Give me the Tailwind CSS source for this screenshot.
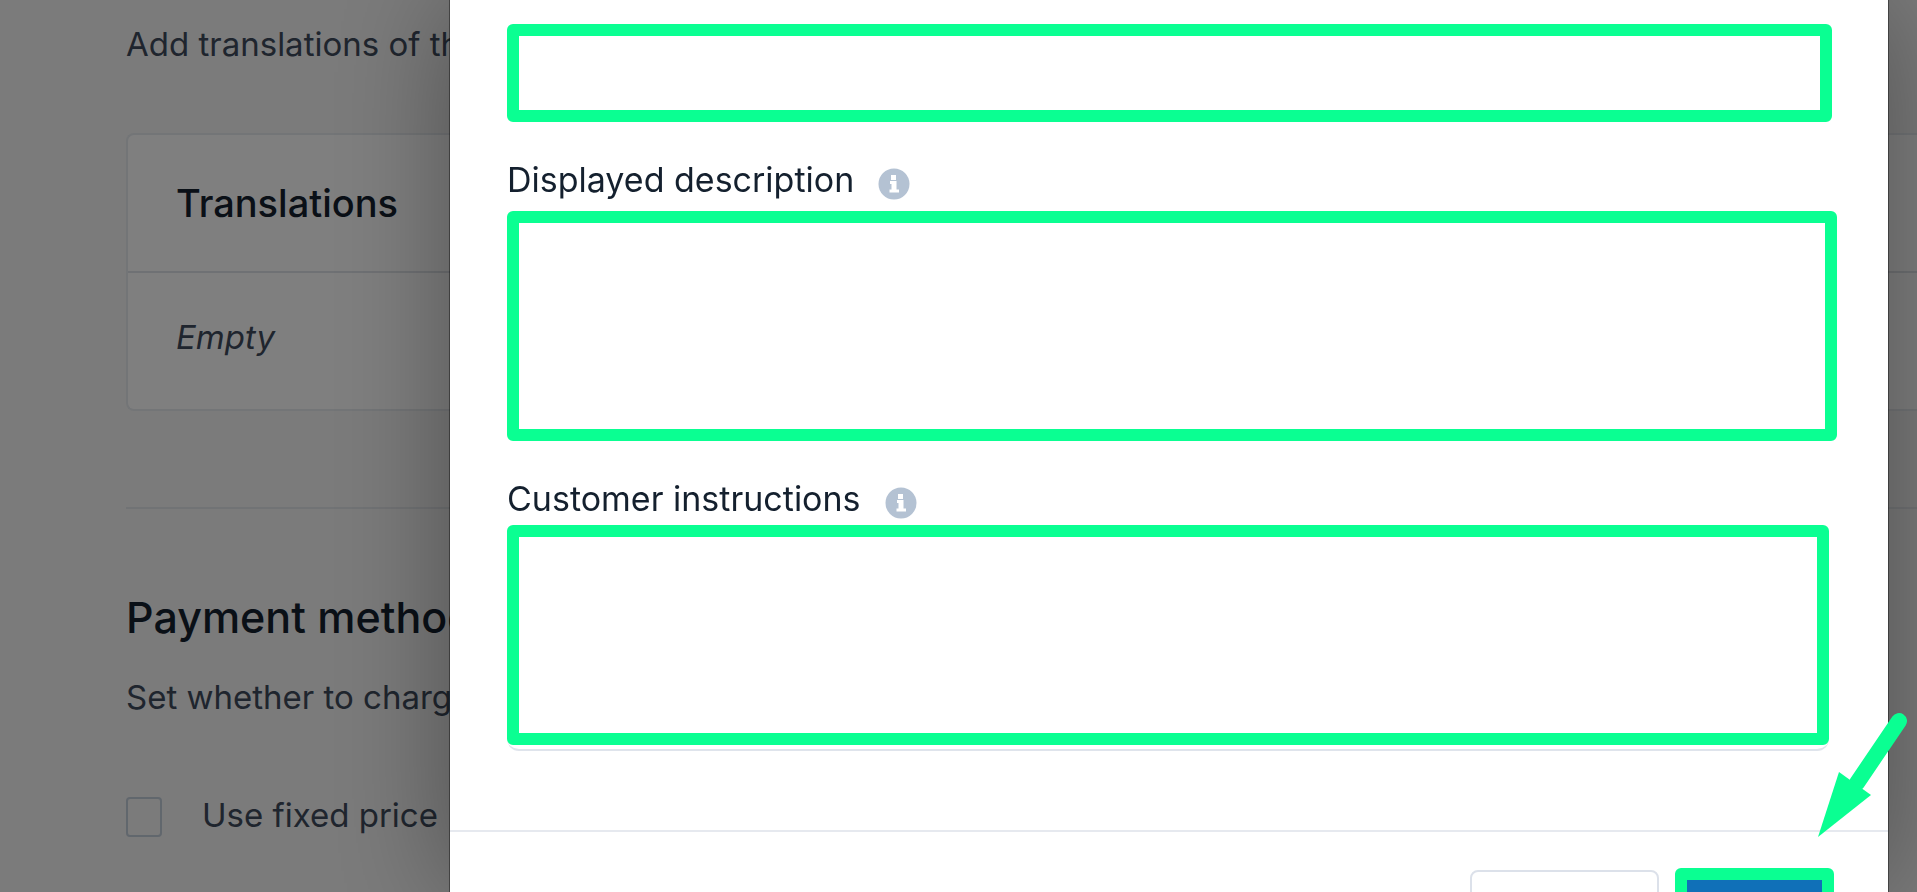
<!DOCTYPE html>
<html lang="en">

<head>
    <meta charset="utf-8">
    <title>Payment settings</title>
    <script src="https://cdn.jsdelivr.net/npm/@tailwindcss/browser@4"></script>
</head>

<body class="h-screen overflow-hidden bg-[#f6f6f6] font-['Inter',sans-serif] text-[#14202e]">
    <!-- settings page -->
    <main class="pt-6 pl-[126px] text-[33px] leading-10 text-[#3f4b5c]">
        <p>Add translations of the text</p>

        <section class="mt-[69px] rounded-l-lg border-2 border-r-0 border-[#e6eaee] bg-white">
            <h3 class="border-b-2 border-[#dfe3e8] px-12 py-12 text-[38px] leading-10 font-medium text-[#14202e]">Translations</h3>
            <p class="px-12 pt-11 pb-13 italic">Empty</p>
        </section>

        <hr class="mt-24 border-t-2 border-[#e3e6ea]">

        <h2 class="mt-[84px] text-[43px] leading-12 font-medium text-[#14202e]">Payment method fee</h2>
        <p class="mt-9">Set whether to charge a fee</p>
        <div class="mt-20 flex items-start gap-10">
            <input type="checkbox" id="fixed-price"
                class="h-10 w-9 appearance-none rounded-sm border-2 border-[#c2cedb] bg-[#f6f6f6]">
            <label for="fixed-price" class="leading-9">Use fixed price</label>
        </div>
    </main>

    <!-- modal -->
    <div class="fixed inset-0 flex bg-black/50 pr-7 pl-[449px]">
        <div role="dialog" aria-label="Add translation"
            class="flex-1 border-x border-black/40 bg-white bg-clip-padding pt-6 shadow-[0_0_110px_rgba(0,0,0,0.35)]">
            <form class="text-[34px] leading-11">
                <div class="pr-14 pl-[57px]">
                    <input type="text" aria-label="Displayed name"
                        class="block h-[98px] w-full rounded-md border-12 border-[#0aff92]">

                    <div class="mt-9 flex items-center gap-6">
                        <label for="description">Displayed description</label>
                        <svg class="mt-2 size-8" viewBox="0 0 32 32">
                            <circle cx="16" cy="16" r="15.5" fill="#b4c2d3" />
                            <path d="M13 7h5v5h-5zM12 13h6.500v8.500h2.500v3h-9.500v-3h2v-5.500h-1.500z" fill="#fff" />
                        </svg>
                    </div>
                    <textarea id="description"
                        class="mt-[9px] block h-[230px] w-[calc(100%+5px)] resize-none rounded-md border-12 border-[#0aff92]"></textarea>

                    <div class="mt-9 flex items-center gap-6">
                        <label for="instructions">Customer instructions</label>
                        <svg class="mt-2 size-8" viewBox="0 0 32 32">
                            <circle cx="16" cy="16" r="15.5" fill="#b4c2d3" />
                            <path d="M13 7h5v5h-5zM12 13h6.500v8.500h2.500v3h-9.500v-3h2v-5.500h-1.500z" fill="#fff" />
                        </svg>
                    </div>
                    <div class="mt-1 mr-[3px] rounded-b-xl border-b-2 border-[#dfe4ec] pb-1">
                        <textarea id="instructions"
                            class="block h-[220px] w-full resize-none rounded-md border-12 border-[#0aff92]"></textarea>
                    </div>
                </div>

                <div class="mt-[79px] flex items-start justify-end gap-4 border-t-2 border-[#e6e9ef] pt-9 pr-[54px]">
                    <button type="button" aria-label="Cancel"
                        class="mt-0.5 h-24 w-[189px] rounded-lg border-2 border-[#dce1ea] bg-white"></button>
                    <button type="submit" aria-label="Save"
                        class="h-24 w-[159px] rounded-md border-12 border-[#0aff92] bg-[#1070b8]"></button>
                </div>
            </form>
        </div>
    </div>

    <!-- arrow over the save button -->
    <svg class="fixed top-[710px] right-2 h-[130px] w-[94px]" viewBox="0 0 94 130" fill="#0aff92">
        <path d="M84 11 42 73" stroke="#0aff92" stroke-width="16" stroke-linecap="round" />
        <path d="M3 127 24 62 56 85z" />
    </svg>
</body>

</html>
